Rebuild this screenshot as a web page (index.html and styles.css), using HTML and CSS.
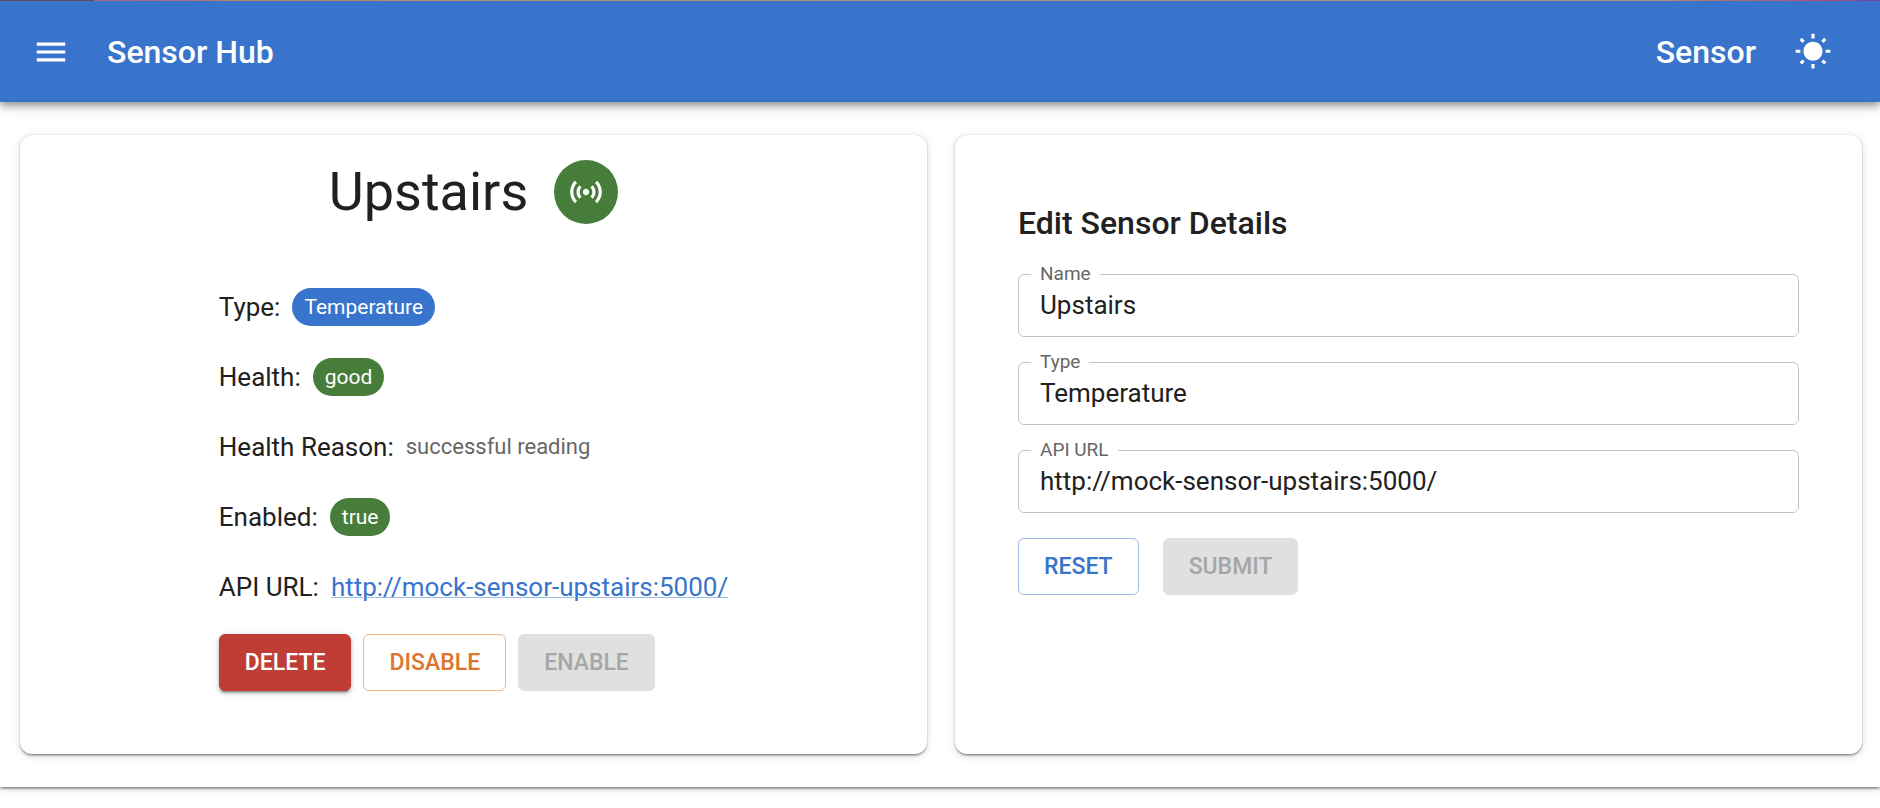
FILE: index.html
```html
<!DOCTYPE html>
<html lang="en">
<head>
<meta charset="utf-8">
<title>Sensor Hub</title>
<meta name="viewport" content="width=device-width, initial-scale=1">
<link rel="stylesheet" href="styles.css">
</head>
<body>
<header class="appbar">
  <button class="icon-button" type="button" aria-label="Open menu">
    <svg class="icon" viewBox="0 0 24 24" aria-hidden="true"><path d="M3 18h18v-2H3v2zm0-5h18v-2H3v2zm0-7v2h18V6H3z"/></svg>
  </button>
  <div class="brand">Sensor Hub</div>
  <div class="page-name">Sensor</div>
  <button class="icon-button" type="button" aria-label="Toggle theme">
    <svg class="icon" viewBox="0 0 24 24" aria-hidden="true"><path d="M6.76 4.84l-1.8-1.79-1.41 1.41 1.79 1.79 1.42-1.41zM4 10.5H1v2h3v-2zm9-9.95h-2V3.5h2V.55zm7.45 3.91l-1.41-1.41-1.79 1.79 1.41 1.41 1.79-1.79zm-3.21 13.7l1.79 1.8 1.41-1.41-1.8-1.79-1.4 1.4zM20 10.5v2h3v-2h-3zm-8-5c-3.31 0-6 2.69-6 6s2.69 6 6 6 6-2.69 6-6-2.69-6-6-6zm-1 16.95h2V19.5h-2v2.95zm-7.45-3.91l1.41 1.41 1.79-1.8-1.41-1.41-1.79 1.8z"/></svg>
  </button>
</header>
<main class="content">
  <section class="card summary">
    <div class="summary-head">
      <h1 class="sensor-name">Upstairs</h1>
      <span class="status-badge">
        <svg class="icon" viewBox="0 0 24 24" aria-hidden="true"><path d="M7.76 16.24C6.67 15.16 6 13.66 6 12s.67-3.16 1.76-4.24l1.42 1.42C8.45 9.9 8 10.9 8 12c0 1.1.45 2.1 1.17 2.83l-1.41 1.41zm8.48 0C17.33 15.16 18 13.66 18 12s-.67-3.16-1.76-4.24l-1.42 1.42C15.55 9.9 16 10.9 16 12c0 1.1-.45 2.1-1.17 2.83l1.41 1.41zM12 10c-1.1 0-2 .9-2 2s.9 2 2 2 2-.9 2-2-.9-2-2-2zm8 2c0 2.21-.9 4.21-2.35 5.65l1.42 1.42C20.88 17.26 22 14.76 22 12s-1.12-5.26-2.93-7.07l-1.42 1.42C19.1 7.79 20 9.79 20 12zM6.35 6.35L4.93 4.93C3.12 6.74 2 9.24 2 12s1.12 5.26 2.93 7.07l1.42-1.42C4.9 16.21 4 14.21 4 12s.9-4.21 2.35-5.65z"/></svg>
      </span>
    </div>
    <div class="details">
      <div class="rows">
        <div class="row"><span>Type:</span><span class="chip chip-primary">Temperature</span></div>
        <div class="row"><span>Health:</span><span class="chip chip-success">good</span></div>
        <div class="row"><span>Health Reason:</span><span class="reason">successful reading</span></div>
        <div class="row"><span>Enabled:</span><span class="chip chip-success">true</span></div>
        <div class="row"><span>API URL:</span><a class="link" href="http://mock-sensor-upstairs:5000/">http://mock-sensor-upstairs:5000/</a></div>
      </div>
      <div class="actions">
        <button class="button button-danger" type="button">DELETE</button>
        <button class="button button-warning" type="button">DISABLE</button>
        <button class="button" type="button" disabled>ENABLE</button>
      </div>
    </div>
  </section>
  <section class="card editor">
    <h2 class="editor-title">Edit Sensor Details</h2>
    <form class="form">
      <div class="field">
        <label class="field-label" for="name">Name</label>
        <input class="field-input" id="name" type="text" value="Upstairs">
      </div>
      <div class="field">
        <label class="field-label" for="type">Type</label>
        <input class="field-input" id="type" type="text" value="Temperature">
      </div>
      <div class="field">
        <label class="field-label" for="url">API URL</label>
        <input class="field-input" id="url" type="text" value="http://mock-sensor-upstairs:5000/">
      </div>
      <div class="actions form-actions">
        <button class="button button-primary" type="reset">RESET</button>
        <button class="button" type="submit" disabled>SUBMIT</button>
      </div>
    </form>
  </section>
</main>
</body>
</html>
```

FILE: styles.css
```css
:root {
  --primary: #3874cb;
  --success: #467d3b;
  --danger: #c03d36;
  --warning: #dd752c;
  --text: #212121;
  --muted: #666;
}

* {
  box-sizing: border-box;
}

body {
  min-height: 100vh;
  margin: 0;
  background: #fff;
  color: var(--text);
  font: 400 26px/38px Roboto, "Liberation Sans", sans-serif;
}

.appbar {
  position: relative;
  z-index: 1;
  display: flex;
  align-items: center;
  min-height: 102px;
  padding: 2px 35px 0 19px;
  background: var(--primary);
  color: #fff;
  font-size: 32px;
  font-weight: 500;
  box-shadow: 0 3px 6px -1px rgba(0, 0, 0, 0.25), 0 6px 8px rgba(0, 0, 0, 0.16), 0 2px 16px rgba(0, 0, 0, 0.12);
}

.appbar::before {
  content: "";
  position: absolute;
  inset: 0 0 auto;
  height: 1px;
  background: linear-gradient(90deg, #5f4a5a 0 5%, #a8638a 5%, #b0707a 11%, #b08568 12%, #b09070 30%, #b09078 88%, #b06a70 92%, #a84d80 98%, #7b45a8 99%);
}

.icon-button {
  display: flex;
  padding: 13px;
  border: 0;
  background: none;
  color: inherit;
}

.icon {
  display: block;
  width: 38px;
  height: 38px;
  fill: currentColor;
}

.brand {
  flex: 1;
  margin-left: 24px;
}

.page-name {
  margin-right: 25px;
}

.content {
  display: grid;
  grid-template-columns: repeat(2, minmax(0, 1fr));
  gap: 28px;
  padding: 33px 18px 33px 20px;
  box-shadow: 0 3px 2px -2px rgba(0, 0, 0, 0.25), 0 2px 2px rgba(0, 0, 0, 0.25), 0 2px 8px rgba(0, 0, 0, 0.14);
}

.card {
  border-radius: 12px;
  background: #fff;
  box-shadow: 0 3px 2px -2px rgba(0, 0, 0, 0.25), 0 2px 2px rgba(0, 0, 0, 0.2), 0 2px 8px rgba(0, 0, 0, 0.14), 0 0 1px rgba(0, 0, 0, 0.25);
}

.summary {
  display: flex;
  flex-direction: column;
  align-items: center;
  padding: 24px 25px 63px;
}

.summary-head {
  display: flex;
  align-items: center;
  gap: 26px;
}

.sensor-name {
  margin: 0;
  font-size: 54px;
  font-weight: 400;
  line-height: 66px;
}

.status-badge {
  display: flex;
  align-items: center;
  justify-content: center;
  width: 64px;
  height: 64px;
  border-radius: 50%;
  background: var(--success);
  color: #fff;
}

.details {
  display: flex;
  flex-direction: column;
  gap: 28px;
  margin-top: 63px;
}

.rows {
  display: flex;
  flex-direction: column;
  gap: 32px;
}

.row {
  display: flex;
  align-items: center;
  gap: 12px;
}

.chip {
  padding: 0 12px;
  border-radius: 19px;
  color: #fff;
  font-size: 21px;
}

.chip-primary {
  background: var(--primary);
}

.chip-success {
  background: var(--success);
}

.reason {
  color: var(--muted);
  font-size: 22px;
}

.link {
  color: var(--primary);
  text-decoration-color: #9bbae5;
  text-decoration-thickness: 1px;
}

.actions {
  display: flex;
  gap: 12px;
}

.button {
  padding: 9px 25px;
  border: 1px solid #e0e0e0;
  border-radius: 6px;
  background: #e0e0e0;
  color: #a6a6a6;
  font: 500 23px/37px Roboto, "Liberation Sans", sans-serif;
}

.button-danger {
  border-color: var(--danger);
  background: var(--danger);
  color: #fff;
  box-shadow: 0 3px 2px -2px rgba(0, 0, 0, 0.2), 0 2px 3px rgba(0, 0, 0, 0.3), 0 2px 8px rgba(0, 0, 0, 0.12);
}

.button-warning {
  border-color: #eeb587;
  background: #fff;
  color: var(--warning);
}

.button-primary {
  border-color: #9bbae5;
  background: #fff;
  color: var(--primary);
}

.editor {
  padding: 63px;
}

.editor-title {
  margin: 0;
  font-size: 32px;
  font-weight: 500;
  line-height: 50px;
}

.form {
  display: flex;
  flex-direction: column;
  gap: 25px;
  margin-top: 26px;
}

.field {
  position: relative;
}

.field-label {
  position: absolute;
  top: -12px;
  left: 13px;
  padding: 0 9px;
  background: #fff;
  color: var(--muted);
  font-size: 19px;
  line-height: 24px;
}

.field-input {
  display: block;
  width: 100%;
  padding: 12px 21px;
  border: 1px solid #c2c2c2;
  border-radius: 6px;
  background: #fff;
  color: inherit;
  font: inherit;
  line-height: 37px;
}

.form-actions {
  gap: 24px;
}
```
